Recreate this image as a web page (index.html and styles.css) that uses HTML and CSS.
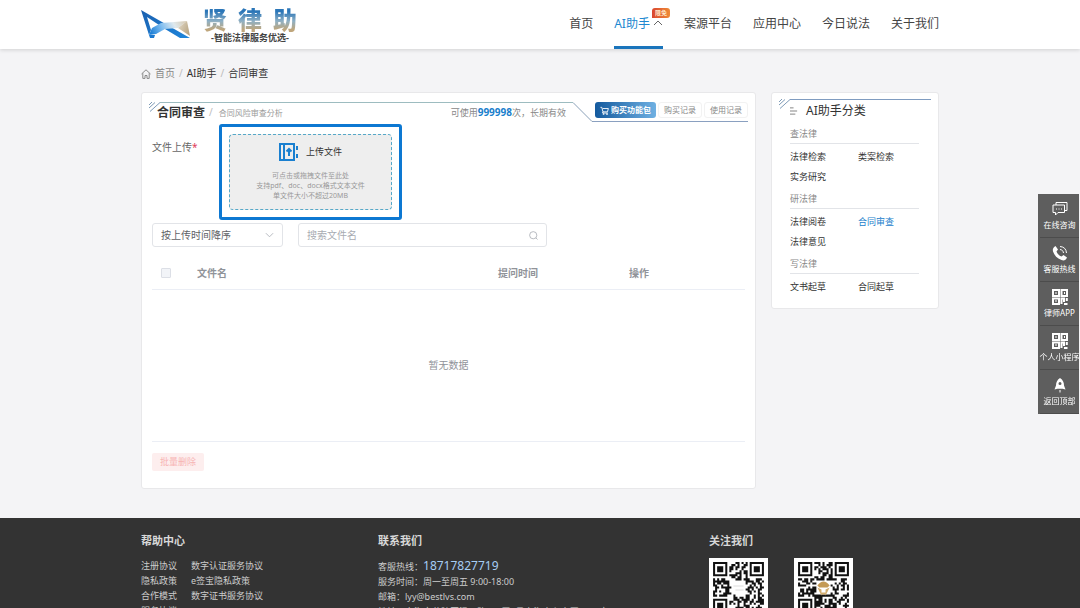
FILE: index.html
```html
<!DOCTYPE html>
<html lang="zh-CN">
<head>
  <meta charset="UTF-8" />
  <meta name="viewport" content="width=device-width, initial-scale=1" />
  <title>合同审查 - 贤律助</title>
  <link rel="stylesheet" href="styles.css">
</head>
<body>
  <header class="site-header">
    <div class="container header-inner">
      <a class="logo" href="#">
        <svg class="logo-mark" viewBox="0 0 50 30" aria-hidden="true">
          <defs>
            <linearGradient id="wing" x1="0" y1="0.6" x2="1" y2="0.4">
              <stop offset="0" stop-color="#1d7fd6" />
              <stop offset="0.35" stop-color="#7dbcf0" />
              <stop offset="0.7" stop-color="#dfe9ee" />
              <stop offset="1" stop-color="#d8cdb8" />
            </linearGradient>
            <linearGradient id="tip" x1="0" y1="0" x2="1" y2="0.6">
              <stop offset="0" stop-color="#e4dccb" />
              <stop offset="1" stop-color="#b9a684" />
            </linearGradient>
            <linearGradient id="stroke" x1="0" y1="0" x2="1" y2="1">
              <stop offset="0" stop-color="#1a5fae" />
              <stop offset="1" stop-color="#1e86dc" />
            </linearGradient>
          </defs>
          <path d="M0 0L28 16L49 28H39L24 19L6 7L10 20L8 25Z" fill="url(#stroke)" />
          <path d="M8 25L11 18L20 13L46 11L37 18L24 19L15 24Z" fill="url(#wing)" />
          <path d="M46 11L49 26L37 18Z" fill="url(#tip)" />
          <path d="M8 25H14L13 28H9Z" fill="#1a78d0" />
        </svg>
        <span class="logo-text">
          <span class="logo-name"><span>贤</span><span>律</span><span>助</span></span>
          <span class="logo-slogan">-智能法律服务优选-</span>
        </span>
      </a>
      <nav class="main-nav">
        <a href="#">首页</a>
        <a href="#" class="active">AI助手
          <svg class="caret" viewBox="0 0 10 6" aria-hidden="true"><path d="M1 5L5 1L9 5" /></svg>
          <span class="badge">限免</span>
        </a>
        <a href="#">案源平台</a>
        <a href="#">应用中心</a>
        <a href="#">今日说法</a>
        <a href="#">关于我们</a>
      </nav>
    </div>
  </header>

  <div class="container">
    <nav class="breadcrumb">
      <svg viewBox="0 0 10 10" aria-hidden="true"><path d="M0.5 5L5 0.8L9.5 5M1.8 4.2V9.4H4V6.5H6V9.4H8.2V4.2" /></svg>
      <a href="#">首页</a>
      <i>/</i>
      <span>AI助手</span>
      <i>/</i>
      <span>合同审查</span>
    </nav>

    <div class="layout">
      <main class="card panel">
        <div class="panel-head">
          <svg class="ticks" viewBox="0 0 12 10" aria-hidden="true"><path d="M0 3L3 0M0 6L6 0.5M1 9.5L11 0.5" /></svg>
          <div class="head-left">
            <h1>合同审查</h1>
            <i>/</i>
            <span class="subtitle">合同风险审查分析</span>
            <span class="quota">可使用<b>999998</b>次，长期有效</span>
          </div>
          <svg class="slant" viewBox="0 0 20 20" aria-hidden="true"><path d="M0 0.5L19 19.5H20" /></svg>
          <div class="head-right">
            <button type="button" class="buy">
              <svg viewBox="0 0 10 10" aria-hidden="true"><path d="M0.5 1.5H2L3.3 6.5H8.3L9.3 2.8H3M3.2 6.5L2.8 7.8H8.6" /><circle cx="4" cy="9" r="0.6" /><circle cx="7.8" cy="9" r="0.6" /></svg>
              购买功能包
            </button>
            <button type="button">购买记录</button>
            <button type="button">使用记录</button>
          </div>
        </div>

        <div class="upload-row">
          <label for="file">文件上传<em>*</em></label>
          <div class="highlight">
            <label class="dropzone" for="file">
              <span class="drop-title">
                <svg viewBox="0 0 20 20" aria-hidden="true">
                  <path d="M1 2H15V18H1ZM5 2V18" />
                  <path d="M10 14V7M7.500 9.500L10 7L12.500 9.500" />
                  <path d="M18 4V8M18 12V16" />
                </svg>
                上传文件
              </span>
              <span>可点击或拖拽文件至此处</span>
              <span>支持pdf、doc、docx格式文本文件</span>
              <span>单文件大小不超过20MB</span>
            </label>
            <input type="file" id="file" class="file-input" />
          </div>
        </div>

        <div class="filters">
          <div class="select-box">
            <select aria-label="排序">
              <option>按上传时间降序</option>
              <option>按上传时间升序</option>
            </select>
            <svg viewBox="0 0 10 6" aria-hidden="true"><path d="M1 1L5 5L9 1" /></svg>
          </div>
          <div class="search-box">
            <input type="text" placeholder="搜索文件名" aria-label="搜索文件名" />
            <svg viewBox="0 0 10 10" aria-hidden="true"><circle cx="4.700" cy="4.700" r="4" /><path d="M7.600 7.600L9.500 9.500" /></svg>
          </div>
        </div>

        <table class="files">
          <thead>
            <tr>
              <th class="col-check"><input type="checkbox" aria-label="全选" disabled /></th>
              <th class="col-name">文件名</th>
              <th class="col-time">提问时间</th>
              <th class="col-action">操作</th>
            </tr>
          </thead>
          <tbody>
            <tr><td colspan="4" class="empty">暂无数据</td></tr>
          </tbody>
        </table>

        <button type="button" class="batch-delete" disabled>批量删除</button>
      </main>

      <aside class="card side">
        <div class="side-head">
          <svg class="ticks" viewBox="0 0 12 10" aria-hidden="true"><path d="M0 3L3 0M0 6L6 0.5M1 9.5L11 0.5" /></svg>
          <h2>
            <svg viewBox="0 0 9 8" aria-hidden="true"><path d="M0 0.5H4M0 4H8M0 7.500H6" /></svg>
            AI助手分类
          </h2>
        </div>
        <section>
          <h3>查法律</h3>
          <div class="links">
            <a href="#">法律检索</a>
            <a href="#">类案检索</a>
            <a href="#">实务研究</a>
          </div>
        </section>
        <section>
          <h3>研法律</h3>
          <div class="links">
            <a href="#">法律阅卷</a>
            <a href="#" class="current">合同审查</a>
            <a href="#">法律意见</a>
          </div>
        </section>
        <section>
          <h3>写法律</h3>
          <div class="links">
            <a href="#">文书起草</a>
            <a href="#">合同起草</a>
          </div>
        </section>
      </aside>
    </div>
  </div>

  <footer class="site-footer">
    <div class="container footer-inner">
      <div class="help">
        <h4>帮助中心</h4>
        <div class="help-links">
          <a href="#">注册协议</a><a href="#">数字认证服务协议</a>
          <a href="#">隐私政策</a><a href="#">e签宝隐私政策</a>
          <a href="#">合作模式</a><a href="#">数字证书服务协议</a>
          <a href="#">服务协议</a>
        </div>
      </div>
      <div class="contact">
        <h4>联系我们</h4>
        <p>客服热线：<b>18717827719</b></p>
        <p>服务时间：周一至周五 9:00-18:00</p>
        <p>邮箱：lyy@bestlvs.com</p>
        <p>地址：上海市黄陂区温州路300弄2号上海中心大厦2703室</p>
      </div>
      <div class="follow">
        <h4>关注我们</h4>
        <div class="codes">
          <svg class="qr" data-seed="7" data-mark="plain" viewBox="0 0 29 29" role="img" aria-label="公众号"></svg>
          <svg class="qr" data-seed="23" data-mark="gold" viewBox="0 0 29 29" role="img" aria-label="小程序"></svg>
        </div>
      </div>
    </div>
  </footer>

  <div class="toolbar">
    <a href="#">
      <svg viewBox="0 0 16 16" aria-hidden="true"><path d="M4 4V1.500H15V9.500H13M1 4H12.500V11.500H6L3.500 14V11.500H1Z" /><path d="M4 8H5M6.500 8H7.500M9 8H10" /></svg>
      在线咨询
    </a>
    <a href="#">
      <svg viewBox="0 0 16 16" aria-hidden="true"><path class="solid" d="M3.500 1L6 4.500L4.500 6.500C5.500 9 7 10.500 9.500 11.500L11.500 10L15 12.500C14 15 12 16 9.500 15C5 13.500 2.500 10.500 1 6.500C0.300 4 1.500 2 3.500 1Z" /><path d="M8 4.500C10 4.700 11.300 6 11.500 8M8 1.500C12 1.800 14.200 4 14.500 8" /></svg>
      客服热线
    </a>
    <a href="#">
      <svg class="code-icon" viewBox="0 0 16 16" aria-hidden="true"><path d="M1 1H7V7H1ZM9.500 1H15V7H9.500ZM1 9.500H7V15H1ZM9.500 15V9.500H12V13M14.800 9V12M12 15H15.500M3.500 4H4.500M12 4H13M3.500 12H4.500" /></svg>
      律师APP
    </a>
    <a href="#">
      <svg class="code-icon" viewBox="0 0 16 16" aria-hidden="true"><path d="M1 1H7V7H1ZM9.500 1H15V7H9.500ZM1 9.500H7V15H1ZM9.500 15V9.500H12V13M14.800 9V12M12 15H15.500M3.500 4H4.500M12 4H13M3.500 12H4.500" /></svg>
      个人小程序
    </a>
    <a href="#">
      <svg viewBox="0 0 16 16" aria-hidden="true"><path class="solid" fill-rule="evenodd" d="M8 1C11 3 12 5.500 12 8.500L13.500 12.500L10.500 11.800H5.500L2.500 12.500L4 8.500C4 5.500 5 3 8 1ZM8 5A1.500 1.500 0 1 0 8 8A1.500 1.500 0 1 0 8 5Z" /><path d="M8 13V15.500" /></svg>
      返回顶部
    </a>
  </div>

  <script src="script.js"></script>
</body>
</html>
```

FILE: styles.css
```css
* {
  box-sizing: border-box;
}
html {
  scrollbar-width: none;
}
body {
  margin: 0;
  background: #f4f4f6;
  color: #333;
  font-family: "Noto Sans", "Noto Sans CJK SC", sans-serif;
  font-size: 9px;
  line-height: 15px;
}
a {
  color: inherit;
  text-decoration: none;
}
h1, h2, h3, h4, p {
  margin: 0;
}
i, em {
  font-style: normal;
}
svg {
  fill: none;
  stroke: currentColor;
  flex: none;
}
button, input, select {
  font: inherit;
  color: inherit;
}
.container {
  max-width: 798px;
  margin: 0 auto;
}

/* header */
.site-header {
  background: #fff;
  box-shadow: 0 1px 4px rgba(0,0,0,0.15);
}
.header-inner {
  display: flex;
  justify-content: space-between;
  height: 49px;
}
.logo {
  display: flex;
  align-items: center;
  gap: 12px;
}
.logo-mark {
  width: 50px;
  height: 30px;
  stroke: none;
}
.logo-text {
  display: flex;
  flex-direction: column;
  align-items: center;
}
.logo-name {
  display: flex;
  gap: 11px;
  font-size: 24px;
  font-weight: 900;
  line-height: 24px;
}
.logo-name span {
  background: linear-gradient(#2b76b8 15%, #8fb0c4 55%, #bfa67c 90%);
  background-clip: text;
  color: transparent;
}
.logo-slogan {
  margin-top: 1px;
  color: #444;
  font-size: 9px;
  font-weight: bold;
  line-height: 9px;
}
.main-nav {
  display: flex;
  gap: 21px;
  font-size: 12px;
  line-height: 48px;
  color: #444;
}
.main-nav .active {
  position: relative;
  display: flex;
  gap: 3px;
  color: #2088d0;
  border-bottom: 3px solid #1a75bc;
}
.caret {
  width: 10px;
  height: 6px;
  margin-top: 20px;
  color: #666;
}
.badge {
  position: absolute;
  top: 8px;
  right: -7px;
  padding: 0 3px;
  border-radius: 3px 3px 3px 0;
  background: linear-gradient(90deg, #d9452f, #ef8b35);
  color: #ffe9c9;
  font-size: 6px;
  font-weight: bold;
  line-height: 10px;
}

/* breadcrumb */
.breadcrumb {
  display: flex;
  align-items: center;
  gap: 4px;
  padding: 16px 0 10px;
  font-size: 10px;
  line-height: 17px;
}
.breadcrumb svg {
  width: 10px;
  height: 10px;
  color: #888;
}
.breadcrumb a {
  color: #888;
}
.breadcrumb i, .head-left i {
  color: #bbb;
}

.layout {
  display: flex;
  align-items: flex-start;
  gap: 15px;
}
.card {
  background: #fff;
  border: 1px solid #e8e8ea;
  border-radius: 3px;
}

/* main panel */
.panel {
  flex: 1;
  padding: 9px 7px 17px 10px;
}
.panel-head {
  position: relative;
  display: flex;
  height: 20px;
  padding-left: 8px;
}
.ticks {
  position: absolute;
  left: -3px;
  top: 0;
  width: 12px;
  height: 10px;
  color: #7f9cb8;
}
.head-left {
  flex: 1;
  display: flex;
  align-items: center;
  border-top: 1px solid #9dbcc0;
  white-space: nowrap;
}
.head-left h1 {
  margin-left: -3px;
  font-size: 12px;
}
.head-left i {
  padding: 0 6px 0 4px;
  font-size: 10px;
}
.subtitle {
  color: #999;
  font-size: 8px;
}
.quota {
  margin-left: auto;
  padding-right: 7px;
  color: #888;
}
.quota b {
  color: #1a80cc;
  font-size: 10px;
}
.slant {
  width: 20px;
  height: 20px;
  color: #8aa0b8;
}
.head-right {
  display: flex;
  align-items: flex-start;
  gap: 2px;
  padding-left: 2px;
  border-bottom: 1px solid #8aa0c0;
}
.head-right button {
  height: 16px;
  padding: 0 5px;
  border: 1px solid #f2f2f2;
  border-radius: 3px;
  background: #fff;
  color: #888;
  font-size: 8px;
  line-height: 12px;
}
.head-right .buy {
  display: flex;
  align-items: center;
  gap: 2px;
  padding: 0 5px;
  border: 0;
  background: linear-gradient(90deg, #145a9e, #6fb0e2);
  color: #fff;
  font-weight: bold;
}
.buy svg {
  width: 9px;
  height: 9px;
}
.upload-row {
  display: flex;
  margin-top: 2px;
}
.upload-row > label {
  width: 67px;
  padding-top: 16px;
  color: #666;
  font-size: 10px;
}
.upload-row em {
  color: #e0405a;
}
.highlight {
  padding: 7px;
  border: 3px solid #0d78d2;
  border-radius: 3px;
}
.dropzone {
  display: flex;
  flex-direction: column;
  align-items: center;
  width: 163px;
  height: 76px;
  padding-top: 7px;
  border: 1px dashed #56a8c8;
  border-radius: 4px;
  background: #eee;
  color: #999;
  font-size: 7px;
  line-height: 10px;
}
.drop-title {
  display: flex;
  align-items: center;
  gap: 7px;
  margin-bottom: 9px;
  color: #333;
  font-size: 9px;
}
.drop-title svg {
  width: 20px;
  height: 20px;
  color: #1a80d0;
  stroke-width: 2;
}
.file-input {
  display: none;
}

/* sort and search */
.filters {
  display: flex;
  gap: 15px;
  margin-top: 3px;
  font-size: 10px;
}
.select-box, .search-box {
  display: flex;
  align-items: center;
  height: 24px;
  padding: 0 8px;
  border: 1px solid #e2e4e8;
  border-radius: 3px;
  color: #606266;
}
.select-box {
  width: 131px;
}
.search-box {
  width: 249px;
}
.select-box select, .search-box input {
  flex: 1;
  min-width: 0;
  padding: 0;
  border: 0;
  outline: none;
  background: none;
  appearance: none;
}
.search-box input::placeholder {
  color: #a8abb2;
}
.select-box svg {
  width: 9px;
  height: 6px;
  color: #b0b3ba;
}
.search-box svg {
  width: 9px;
  height: 9px;
  color: #b0b3ba;
}

/* file list */
.files {
  width: calc(100% - 3px);
  margin-top: 11px;
  border-collapse: collapse;
  table-layout: fixed;
  color: #909399;
  font-size: 10px;
}
.files th {
  height: 31px;
  padding: 0;
  border-bottom: 1px solid #ebeef5;
  text-align: left;
}
.col-check {
  width: 45px;
}
.col-time {
  width: 131px;
}
.col-action {
  width: 116px;
}
.files input {
  display: block;
  appearance: none;
  width: 10px;
  height: 10px;
  margin: 0 0 0 9px;
  border: 1px solid #dcdfe6;
  border-radius: 1px;
  background: #f2f4f8;
}
.files .empty {
  height: 152px;
  padding: 0;
  border-bottom: 1px solid #ebeef5;
  text-align: center;
}
.batch-delete {
  display: block;
  margin-top: 11px;
  height: 18px;
  padding: 0 8px;
  border: 0;
  border-radius: 2px;
  background: #fdeeee;
  color: #f7b4b4;
  line-height: 18px;
}

/* category card */
.side {
  width: 168px;
  padding: 6px 19px 11px 18px;
}
.side-head {
  position: relative;
  margin-right: -12px;
  border-top: 1px solid #7f9cc0;
}
.side-head .ticks {
  left: -11px;
  top: -1px;
}
.side h2 {
  display: flex;
  align-items: center;
  gap: 8px;
  font-size: 12px;
  font-weight: normal;
  line-height: 22px;
}
.side h2 svg {
  width: 8px;
  height: 8px;
  color: #777;
}
.side h3 {
  margin-top: 3px;
  border-bottom: 1px solid #e2e4e8;
  color: #888;
  font-size: 9px;
  font-weight: normal;
  line-height: 18px;
}
.links {
  display: grid;
  grid-template-columns: 68px 1fr;
  padding-top: 3px;
  line-height: 20px;
}
.links .current {
  color: #1a80cc;
}

/* footer */
.site-footer {
  margin-top: 29px;
  padding: 14px 0 40px;
  background: #333;
  color: #ccc;
}
.footer-inner {
  display: flex;
}
.site-footer h4 {
  margin-bottom: 9px;
  color: #d8d8d8;
  font-size: 11px;
  line-height: 17px;
}
.help {
  width: 237px;
}
.help-links {
  display: grid;
  grid-template-columns: 50px 1fr;
}
.contact {
  width: 331px;
}
.contact b {
  color: #a6cdf5;
  font-size: 12px;
  font-weight: normal;
}
.codes {
  display: flex;
  gap: 26px;
}
.qr {
  width: 59px;
  height: 59px;
  background: #fff;
  stroke: none;
}

/* floating tools */
.toolbar {
  position: fixed;
  top: 194px;
  right: 1px;
  width: 41px;
  background: #5e5e5e;
  color: #fff;
}
.toolbar a {
  display: flex;
  flex-direction: column;
  align-items: center;
  gap: 2px;
  height: 44px;
  padding-top: 7px;
  margin-left: 2px;
  border-bottom: 1px solid #4c4c4c;
  font-size: 8px;
  line-height: 12px;
  white-space: nowrap;
}
.toolbar svg {
  width: 16px;
  height: 16px;
}
.toolbar .code-icon {
  stroke-width: 2;
}
.toolbar .solid {
  fill: currentColor;
  stroke: none;
}
```

FILE: script.js
```js
const SIZE = 25;
const PAD = 2;

function inFinder(x, y) {
  return (x < 8 && y < 8) || (x > SIZE - 9 && y < 8) || (x < 8 && y > SIZE - 9);
}

function drawCode(svg) {
  let seed = Number(svg.dataset.seed);
  let d = '';
  for (let y = 0; y < SIZE; y++) {
    for (let x = 0; x < SIZE; x++) {
      seed = (seed * 16807) % 2147483647;
      const center = Math.abs(x - 12) < 4 && Math.abs(y - 12) < 4;
      if (seed % 100 < 52 && !inFinder(x, y) && !center) {
        d += `M${x + PAD} ${y + PAD}h1v1h-1z`;
      }
    }
  }
  // finder squares
  [[0, 0], [SIZE - 7, 0], [0, SIZE - 7]].forEach(([x, y]) => {
    d += `M${x + PAD} ${y + PAD}h7v7h-7zm1 1v5h5v-5zm1 1h3v3h-3z`;
  });
  let html = `<path d="${d}" fill="#111" fill-rule="evenodd" />`;
  if (svg.dataset.mark === 'gold') {
    html += '<path d="M11.500 13.500q3-4 6 0l-1 1h-4z" fill="#c49a55" /><path d="M11.500 14.500l2 1v3zM17.500 14.500l-2 1v3zM13.500 17h2v1h-2z" fill="#d3ae70" />';
  } else {
    html += '<path d="M12 13.500h5v0.500h-5zM13 15.500h4v0.500h-4z" fill="#ddd" />';
  }
  svg.innerHTML = html;
}

document.querySelectorAll('.qr').forEach(drawCode);
```
